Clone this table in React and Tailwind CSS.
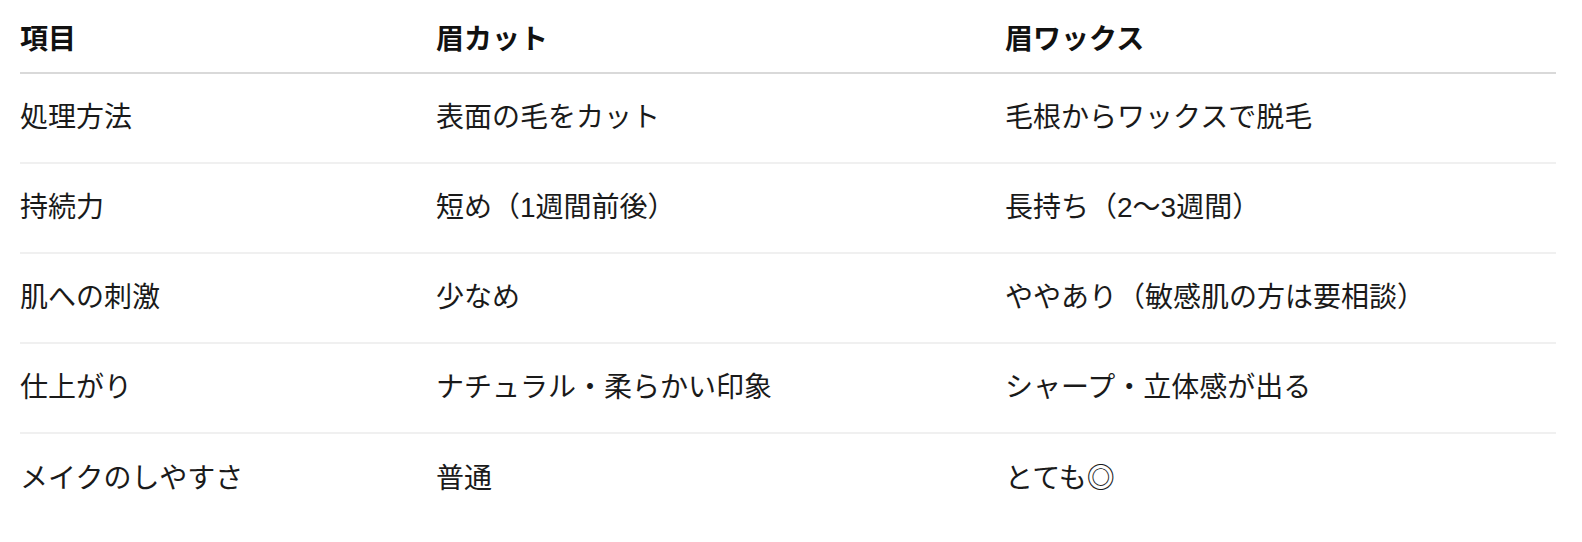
import React from "react";

const rows = [
  ["処理方法", "表面の毛をカット", "毛根からワックスで脱毛"],
  ["持続力", "短め（1週間前後）", "長持ち（2〜3週間）"],
  ["肌への刺激", "少なめ", "ややあり（敏感肌の方は要相談）"],
  ["仕上がり", "ナチュラル・柔らかい印象", "シャープ・立体感が出る"],
  ["メイクのしやすさ", "普通", "とても◎"],
];

const App = () => {
  return (
    <div
      className="min-h-screen bg-white pt-2 pl-5 pr-[26px] text-[#1a1a1a]"
      style={{ fontFamily: '"Liberation Sans", "Noto Sans CJK JP", sans-serif' }}
    >
      <table className="w-[1536px] table-fixed border-collapse text-[28px]">
        <colgroup>
          <col className="w-[416px]" />
          <col className="w-[569px]" />
          <col className="w-[551px]" />
        </colgroup>
        <thead>
          <tr className="border-b-2 border-[#d9d9d9]">
            {["項目", "眉カット", "眉ワックス"].map((h) => (
              <th key={h} className="h-[65px] p-0 text-left align-middle font-bold text-[#111]">
                {h}
              </th>
            ))}
          </tr>
        </thead>
        <tbody>
          {rows.map((r, i) => (
            <tr
              key={i}
              className={i < rows.length - 1 ? "border-b-2 border-[#f0f0f0]" : ""}
            >
              {r.map((c, j) => (
                <td key={j} className="h-[90px] p-0 align-middle leading-normal">
                  {c}
                </td>
              ))}
            </tr>
          ))}
        </tbody>
      </table>
    </div>
  );
};

export default App;
